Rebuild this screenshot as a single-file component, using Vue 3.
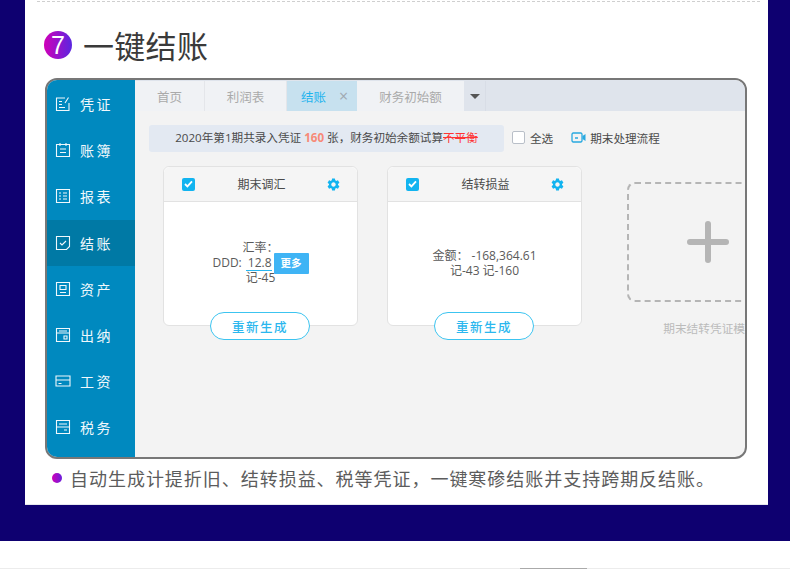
<template>
  <div class="page">
    <div class="sheet">
      <div class="rule"></div>
      <div class="heading">
        <span class="num">7</span>
        <h2>一键结账</h2>
      </div>
      <div class="frame">
        <div class="side">
          <div v-for="m in menus" :key="m.name" class="menu" :class="{ on: m.name === '结账' }">
            <svg class="ico" viewBox="0 0 16 16" fill="none" stroke="currentColor" stroke-width="1.1">
              <path :d="m.d" />
            </svg>
            <span>{{ m.name }}</span>
          </div>
        </div>
        <div class="main">
          <div class="tabs">
            <div class="tab t1">首页</div>
            <div class="tab t2">利润表</div>
            <div class="tab t3 cur">结账<i>×</i></div>
            <div class="tab t4">财务初始额</div>
            <div class="more"><b></b></div>
          </div>
          <div class="bar">
            <div class="notice">2020年第1期共录入凭证 <em>160</em> 张，财务初始余额试算<s>不平衡</s></div>
            <label class="all"><span class="box"></span>全选</label>
            <div class="flow">
              <svg width="15" height="11" viewBox="0 0 15 11" fill="none" stroke="#29a9e0" stroke-width="1.3">
                <path d="M2 1h8l1 1v7l-1 1H2L1 9V2z" />
                <path d="M14.500 2v7L11.500 7V4z" fill="#29a9e0" stroke="none" />
                <path d="M4 6h3" />
              </svg>
              期末处理流程
            </div>
          </div>
          <div class="cards">
            <div class="card">
              <div class="card-head">
                <span class="tick"><svg width="9" height="8" viewBox="0 0 9 8" fill="none" stroke="#fff" stroke-width="1.8"><path d="M1 4l2.400 2.400L8 1.400" /></svg></span>
                <span class="card-title">期末调汇</span>
                <svg class="gear" width="15" height="15" viewBox="0 0 24 24"><path fill="#12b4f0" :d="gear" /></svg>
              </div>
              <div class="card-body">
                <div>汇率：</div>
                <div class="rate">DDD: <u>12.8</u><span class="btn-more">更多</span></div>
                <div>记-45</div>
              </div>
              <button class="redo">重新生成</button>
            </div>
            <div class="card">
              <div class="card-head">
                <span class="tick"><svg width="9" height="8" viewBox="0 0 9 8" fill="none" stroke="#fff" stroke-width="1.8"><path d="M1 4l2.400 2.400L8 1.400" /></svg></span>
                <span class="card-title">结转损益</span>
                <svg class="gear" width="15" height="15" viewBox="0 0 24 24"><path fill="#12b4f0" :d="gear" /></svg>
              </div>
              <div class="card-body">
                <div>金额： -168,364.61</div>
                <div>记-43 记-160</div>
              </div>
              <button class="redo">重新生成</button>
            </div>
            <div class="add-col">
              <div class="add">
                <svg width="42" height="42" viewBox="0 0 42 42" stroke="#b5b5b5" stroke-width="6" stroke-linecap="round"><path d="M3 21h36M21 3v36" /></svg>
              </div>
              <div class="add-cap">期末结转凭证模板</div>
            </div>
          </div>
        </div>
      </div>
      <div class="desc"><span class="dot"></span>自动生成计提折旧、结转损益、税等凭证，一键寒碜结账并支持跨期反结账。</div>
    </div>
    <div class="foot"><i></i></div>
  </div>
</template>

<script setup>
const gear = 'M19.14 12.94c.04-.3.06-.61.06-.94 0-.32-.02-.64-.07-.94l2.030-1.580a.49.49 0 0 0 .12-.61l-1.920-3.320a.488.488 0 0 0-.59-.22l-2.390.96c-.5-.38-1.030-.7-1.620-.94l-.36-2.540a.484.484 0 0 0-.48-.41h-3.840c-.24 0-.43.17-.47.41l-.36 2.540c-.59.24-1.130.57-1.620.94l-2.390-.96c-.22-.08-.47 0-.59.22L2.740 8.870c-.12.21-.08.47.12.61l2.030 1.580c-.05.3-.09.63-.09.94s.02.64.07.94l-2.030 1.580a.49.49 0 0 0-.12.61l1.920 3.320c.12.22.37.29.59.22l2.390-.96c.5.38 1.030.7 1.620.94l.36 2.540c.05.24.24.41.48.41h3.840c.24 0 .44-.17.47-.41l.36-2.540c.59-.24 1.130-.56 1.620-.94l2.390.96c.22.08.47 0 .59-.22l1.920-3.320c.12-.22.07-.47-.12-.61l-2.010-1.580zM12 15.600c-1.980 0-3.600-1.620-3.600-3.600s1.620-3.600 3.600-3.600 3.600 1.620 3.600 3.600-1.620 3.600-3.600 3.600z'

const menus = [
  { name: '凭证', d: 'M10 2H1.500v12.500h12.500V7M4 5.500h3M4 8.500h3M4 11.500h6M10 7l3.500-5.500' },
  { name: '账簿', d: 'M1.500 2.500h13v12h-13zM5 1v3M11 1v3M5 7h6M5 10.500h6' },
  { name: '报表', d: 'M1.500 1.500h13v13h-13zM4 5h2M8 5h4M4 8h2M8 8h4M4 11h2M8 11h4' },
  { name: '结账', d: 'M1.500 1.500h13v10l-3 3h-10zM5 8l2 2 4-4' },
  { name: '资产', d: 'M1.500 1.500h13v13h-13zM5 4.500h6v4H5zM5 11.500h6' },
  { name: '出纳', d: 'M1.500 1.500h13v13h-13zM1.500 6h13M4 4h8M9 9h3v3H9z' },
  { name: '工资', d: 'M1 3h14v10H1zM1 7h14M3.500 10.500h3' },
  { name: '税务', d: 'M1.500 1.500h13v13h-13zM4 5h8M1.500 8h13M9 11h3' }
]
</script>

<style>
html, body {
  margin: 0;
  background: #fff;
}
</style>

<style scoped>
.page {
  width: 790px;
  height: 569px;
  overflow: hidden;
  background: #0e0070;
  font-family: "Open Sans", "Noto Sans CJK SC", sans-serif;
  position: relative;
}
.sheet {
  width: 743px;
  height: 505px;
  margin-left: 25px;
  background: #fff;
  box-sizing: border-box;
  padding: 1px 8px 0 12px;
  border-bottom: 1px solid #e6e8ee;
}
.rule {
  height: 0;
  border-top: 1px dashed #cfcfcf;
}
.heading {
  display: flex;
  align-items: center;
  height: 36px;
  margin: 25px 0 0 7px;
}
.num {
  width: 28px;
  height: 28px;
  border-radius: 50%;
  background: linear-gradient(90deg, #d000b8, #5a26e0);
  color: #fff;
  font-size: 25px;
  line-height: 28px;
  text-align: center;
  font-family: "Liberation Sans", sans-serif;
}
h2 {
  margin: 0 0 0 11px;
  font-weight: 400;
  font-size: 31px;
  letter-spacing: .3px;
  line-height: 36px;
  color: #3a3a3a;
  font-family: "Noto Sans CJK SC", sans-serif;
}
.frame {
  width: 702px;
  height: 381px;
  margin: 15px 0 0 8px;
  box-sizing: border-box;
  border: 2px solid #777;
  border-radius: 12px;
  overflow: hidden;
  display: flex;
  background: #f3f3f3;
}
.side {
  width: 88px;
  background: #0089bf;
  flex-shrink: 0;
  padding-top: 1px;
}
.menu {
  height: 46.2px;
  display: flex;
  align-items: center;
  padding-left: 8px;
  color: #f0f8fc;
  font-size: 14px;
  letter-spacing: 2.500px;
  font-family: "Noto Sans CJK SC", sans-serif;
}
.menu.on {
  background: #0079a5;
}
.ico {
  width: 16px;
  height: 16px;
  margin-right: 9px;
}
.main {
  flex: 1;
  min-width: 0;
  overflow: hidden;
}
.tabs {
  display: flex;
  height: 31px;
  box-sizing: border-box;
  padding-top: 1px;
  background: #dfe4ec;
  font-size: 12.500px;
  color: #aaa;
}
.tab {
  display: flex;
  align-items: center;
  justify-content: center;
  background: #f0f2f5;
  border-right: 1px solid #e4e6ea;
  box-sizing: border-box;
}
.t1 { width: 70px; }
.t2 { width: 82px; }
.t3 { width: 70px; }
.t4 { width: 107px; border-right: 0; }
.cur {
  background: #c7e1ef;
  color: #1fb4ee;
  border-right: 0;
  gap: 13px;
  padding-left: 5px;
}
.cur i {
  font-style: normal;
  font-size: 16px;
  line-height: 16px;
  color: #a0a8b0;
}
.more {
  width: 21px;
  border-right: 1px solid #d8dde6;
  display: flex;
  align-items: center;
  justify-content: center;
}
.more b {
  border: 5px solid transparent;
  border-top: 5px solid #555;
  border-bottom: 0;
}
.bar {
  display: flex;
  align-items: center;
  height: 27px;
  margin: 14px 0 0 14px;
  font-size: 11.600px;
  color: #4a4a4a;
}
.notice {
  width: 355px;
  height: 27px;
  line-height: 26px;
  background: #e3e9f2;
  border-radius: 3px;
  text-align: center;
  white-space: nowrap;
}
.notice em {
  font-style: normal;
  font-weight: 700;
  color: #f78a78;
}
.notice s {
  color: #f33;
}
.all {
  display: flex;
  align-items: center;
  margin: -2px 0 0 8px;
  gap: 5px;
}
.box {
  width: 11px;
  height: 11px;
  border: 1px solid #b9bfc8;
  border-radius: 2px;
  background: #fff;
}
.flow {
  display: flex;
  align-items: center;
  gap: 4px;
  margin: -2px 0 0 18px;
}
.cards {
  display: flex;
  align-items: flex-start;
  margin: 14px 0 0 28px;
}
.card {
  width: 195px;
  height: 160px;
  box-sizing: border-box;
  flex-shrink: 0;
  border: 1px solid #e2e2e2;
  border-radius: 6px;
  background: #fff;
  margin-right: 29px;
  position: relative;
}
.card-head {
  height: 34px;
  display: flex;
  align-items: center;
  justify-content: space-between;
  padding: 0 16px 0 18px;
  background: #f5f5f5;
  border-bottom: 1px solid #e2e2e2;
  border-radius: 6px 6px 0 0;
  font-size: 12px;
  color: #4a4a4a;
}
.card-title {
  flex: 1;
  text-align: center;
  padding-left: 2px;
}
.tick {
  width: 13px;
  height: 13px;
  border-radius: 2px;
  background: #12b4f0;
  display: flex;
  align-items: center;
  justify-content: center;
}
.card-body {
  height: 110px;
  display: flex;
  flex-direction: column;
  justify-content: center;
  align-items: center;
  font-size: 12px;
  line-height: 15px;
  color: #5a5a5a;
  padding-top: 11px;
  box-sizing: border-box;
}
.rate {
  display: flex;
  align-items: center;
  height: 15px;
}
.rate u {
  text-decoration: none;
  border-bottom: 1px solid #29b6f0;
  margin-left: 4px;
  padding: 0 0 0 2px;
  line-height: 15px;
  height: 15px;
  margin-top: 1px;
}
.btn-more {
  width: 35px;
  height: 21px;
  line-height: 21px;
  margin-left: 2px;
  text-align: center;
  background: #3fb4f5;
  color: #fff;
  font-size: 10.500px;
  font-weight: 700;
  border-radius: 1px;
  margin-top: 1px;
}
.redo {
  position: absolute;
  left: 46px;
  bottom: -15px;
  width: 100px;
  height: 28px;
  padding: 0;
  border: 1px solid #3cc4f0;
  border-radius: 14px;
  background: #fff;
  color: #2bb7ee;
  font: 500 12.500px "Noto Sans CJK SC", sans-serif;
  letter-spacing: 1.500px;
}
.add-col {
  flex-shrink: 0;
  margin: 16px 0 0 16px;
  width: 166px;
}
.add {
  height: 120px;
  width: 162px;
  box-sizing: border-box;
  border: 2px dashed #b5b5b5;
  border-radius: 8px;
  display: flex;
  align-items: center;
  justify-content: center;
}
.add-cap {
  margin-top: 17px;
  text-align: center;
  font-size: 11.700px;
  color: #bbb;
  white-space: nowrap;
}
.desc {
  display: flex;
  align-items: center;
  margin: 7px 0 0 15px;
  font-size: 18px;
  line-height: 24px;
  letter-spacing: .97px;
  color: #5c5c5c;
  white-space: nowrap;
  font-family: "Noto Sans CJK SC", sans-serif;
}
.dot {
  width: 10px;
  height: 10px;
  border-radius: 50%;
  background: linear-gradient(90deg, #d000b8, #6a20dc);
  margin-right: 8px;
}
.foot {
  position: absolute;
  left: 0;
  right: 0;
  top: 541px;
  height: 28px;
  background: #fff;
  border-bottom: 1px solid #ececec;
  box-sizing: border-box;
}
.foot i {
  position: absolute;
  left: 520px;
  bottom: -1px;
  width: 67px;
  height: 1px;
  background: #aaa;
}
</style>
